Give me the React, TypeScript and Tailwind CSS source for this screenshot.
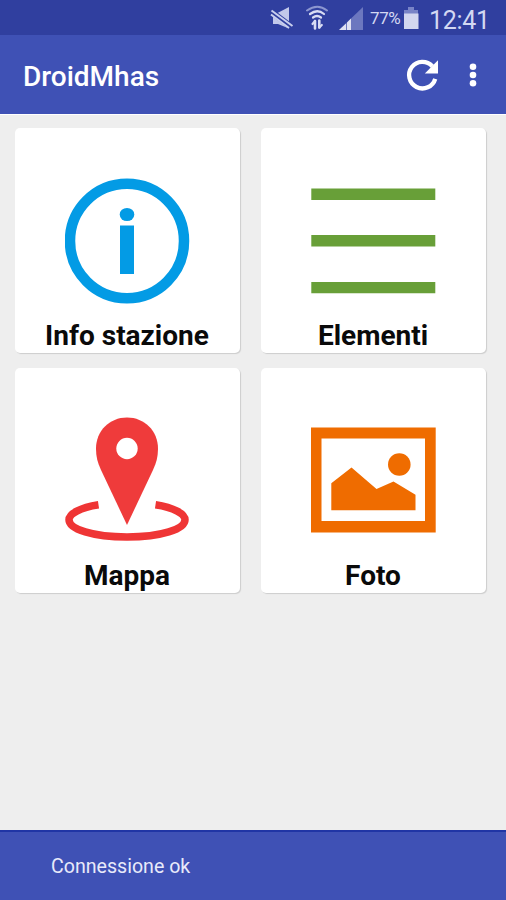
import React from 'react'

function StatusBar() {
  return (
    <div className="flex h-[35px] shrink-0 items-center bg-[#303f9f] pl-[270px] text-[#d3d8f2]">
      {/* Muted speaker */}
      <svg width="24" height="35" viewBox="0 0 24 35" fill="none">
        <path d="M3 13h4.500L19 7v21.500L8 24H3z" fill="#c2c8ea" />
        <path d="M1 11.500l22 16.500" stroke="#303f9f" strokeWidth="6" />
        <path d="M1.500 10.500l21 15.500M1 14.500l18 13.500" stroke="#c9cfee" strokeWidth="2" />
      </svg>
      {/* Wifi with traffic arrows */}
      <svg className="ml-3" width="23" height="35" viewBox="0 0 23 35" fill="none" strokeLinecap="round">
        <path d="M1 10.500q10.500-7.500 20 0" stroke="#8c96d0" strokeWidth="2" />
        <path d="M4 14q7.500-5.500 14 0" stroke="#d8dcf4" strokeWidth="2.200" />
        <path d="M7 17.500q4-3 8 0" stroke="#d8dcf4" strokeWidth="2.200" />
        <path d="M9 21v7.500M13.300 20.500v7" stroke="#d8dcf4" strokeWidth="2.600" />
        <path d="M6.500 24l2.500-3M13.300 27.500l2.500-2.500" stroke="#d8dcf4" strokeWidth="2.200" />
      </svg>
      {/* Signal strength */}
      <svg className="ml-[10px]" width="25" height="35" viewBox="0 0 25 35">
        <path d="M0 30L24 7v23z" fill="#6c77bf" />
        <path d="M0 30l7-6.500V30zM8 22.500l4-4V30H8z" fill="#dfe0f2" />
      </svg>
      <span className="ml-[6px] mt-[3px] w-[32px] whitespace-nowrap text-[17px] tracking-[-0.4px]">77%</span>
      {/* Battery */}
      <svg className="ml-[1px]" width="17" height="35" viewBox="0 0 17 35">
        <path d="M5 7h6v3h4v4H1v-4h4z" fill="#7984c7" />
        <path d="M1 13.500h14.500V29H1z" fill="#d3d7ef" />
      </svg>
      <span className="ml-[9px] mt-[5px] whitespace-nowrap text-[25px] leading-none tracking-[-0.3px]">12:41</span>
    </div>
  )
}

function AppBar() {
  return (
    <header className="flex h-[79px] shrink-0 items-center bg-[#3f51b5] pl-[23px] text-white">
      <h1 className="mt-[5px] w-[382px] text-[28px] font-medium">DroidMhas</h1>
      <svg width="36" height="36" viewBox="0 0 36 36" fill="none">
        <path d="M30.200 21.800A13.300 13.300 0 1 1 27.300 9.200" stroke="white" strokeWidth="4.300" />
        <path d="M33 3.300v13.200H19.800z" fill="white" />
      </svg>
      <svg className="ml-[26px]" width="12" height="28" viewBox="0 0 12 28" fill="white">
        <circle cx="6" cy="5.700" r="3.300" />
        <circle cx="6" cy="14" r="3.300" />
        <circle cx="6" cy="22.300" r="3.300" />
      </svg>
    </header>
  )
}

function InfoIcon() {
  return (
    <svg width="125" height="126" viewBox="0 0 125 126" fill="#039be5">
      <ellipse cx="62" cy="63" rx="57" ry="57.200" fill="none" stroke="#039be5" strokeWidth="10.500" />
      <ellipse cx="62" cy="36.500" rx="7.300" ry="6.600" />
      <path d="M55 47.500h14V96H55z" />
    </svg>
  )
}

function ListIcon() {
  return (
    <svg width="125" height="126" viewBox="0 0 125 126" fill="#689f38">
      <path d="M.300 10.500h124v11.500H.300zM.300 57h124v11.500H.300zM.300 104h124v11.300H.300z" />
    </svg>
  )
}

function MapIcon() {
  return (
    <svg className="overflow-visible" width="125" height="126" viewBox="0 0 125 126">
      <path
        d="M62-.500C44.500-.500 31 13 31 30.500c0 8 1.500 14 5 21.500L62 107l26-55c3.500-7.500 5-13.500 5-21.500C93 13 79.500-.500 62-.500z"
        fill="#ef3b3b"
      />
      <circle cx="62" cy="30.500" r="10.700" fill="white" />
      <path
        d="M33.500 86.700C15 89.500 4 96 4 101.700c0 9.500 24 17.300 58 17.300s58-7.800 58-17.300c0-5.700-11-12.200-29.500-15"
        fill="none"
        stroke="#ef3535"
        strokeWidth="7.500"
      />
    </svg>
  )
}

function PhotoIcon() {
  return (
    <svg width="125" height="126" viewBox="0 0 125 126" fill="#ef6c00">
      <path d="M-.300 9.500h125v105H-.300zM10.500 20.500v82.500h103.500V20.500z" fillRule="evenodd" />
      <path d="M20.300 65.200l20.200-15.700 25 21.500 17-7.500 22 13.300v15.500H20.300z" />
      <circle cx="88.300" cy="46.500" r="11.300" />
    </svg>
  )
}

const tiles = [
  { label: 'Info stazione', icon: <InfoIcon /> },
  { label: 'Elementi', icon: <ListIcon /> },
  { label: 'Mappa', icon: <MapIcon /> },
  { label: 'Foto', icon: <PhotoIcon /> },
]

export default function App() {
  return (
    <div className="flex h-[900px] w-[506px] flex-col overflow-hidden bg-[#eeeeee] font-['Roboto',sans-serif]">
      <StatusBar />
      <AppBar />

      <main className="grid flex-1 grid-cols-[225px_225px] content-start gap-x-[21px] gap-y-[15px] border-t border-white pl-[15px] pt-[13px]">
        {tiles.map((tile) => (
          <button
            key={tile.label}
            className="flex h-[225px] flex-col items-center rounded-[5px] bg-white pt-[50px] shadow-[1px_1px_1px_rgba(0,0,0,0.14)]"
          >
            {tile.icon}
            <span className="-ml-px mt-[16px] whitespace-nowrap text-[28px] font-bold leading-[32px] text-[#0a0a0a]">
              {tile.label}
            </span>
          </button>
        ))}
      </main>

      {/* Connection message */}
      <footer className="flex h-[70px] shrink-0 items-center border-t-2 border-[#2035a5] bg-[#3f51b5] pl-[51px] pt-[2px] text-[19.6px] text-[#e8eafa]">
        Connessione ok
      </footer>
    </div>
  )
}
